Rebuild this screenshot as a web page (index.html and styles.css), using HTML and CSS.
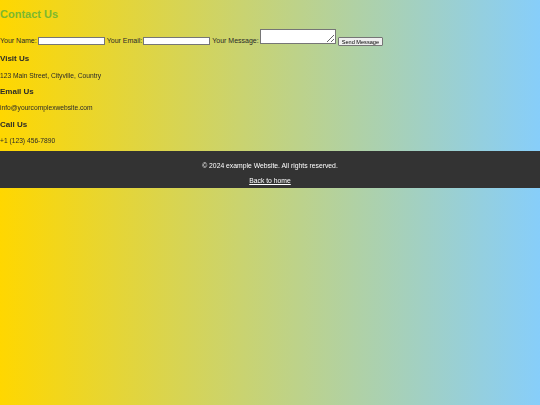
FILE: index.html
```html
<!DOCTYPE html>
<html>
<head>
<meta charset="utf-8">
<link rel="stylesheet" href="styles.css">
</head>
<body>
<main class="contact">
  <h2 class="title">Contact Us</h2>
  <form class="form">
    <label class="lbl">Your Name:</label>
    <input class="inp" type="text">
    <label class="lbl">Your Email:</label>
    <input class="inp" type="email">
    <label class="lbl">Your Message:</label>
    <textarea class="ta"></textarea>
    <button class="btn" type="button">Send Message</button>
  </form>
  <section class="info">
    <h3 class="ih">Visit Us</h3>
    <p class="ip">123 Main Street, Cityville, Country</p>
    <h3 class="ih">Email Us</h3>
    <p class="ip">info@yourcomplexwebsite.com</p>
    <h3 class="ih">Call Us</h3>
    <p class="ip last">+1 (123) 456-7890</p>
  </section>
</main>
<footer class="footer">
  <p class="copy">© 2024 example Website. All rights reserved.</p>
  <a class="back" href="#">Back to home</a>
</footer>
</body>
</html>
```
FILE: styles.css
```css
html, body { margin: 0; padding: 0; }
body {
  min-height: 405px;
  background: linear-gradient(to right, #ffd700, #87cefa);
  font-family: "Liberation Sans", Arial, sans-serif;
  color: #2a2a2a;
}
.title {
  margin: 0;
  padding-top: 7.5px;
  font-size: 11px;
  line-height: 13px;
  color: #7cb82f;
  font-weight: bold;
}
.form {
  margin-top: 8.5px;
  display: flex;
  align-items: flex-end;
  font-size: 7px;
  line-height: 7px;
}
.lbl { margin-right: 1px; margin-bottom: 0; }
.inp {
  width: 67px; height: 8px; box-sizing: border-box;
  border: 1px solid #767676; padding: 0; margin: 0 2px -1px 0;
  background: #fff;
}
.ta {
  width: 76px; height: 15px; box-sizing: border-box;
  border: 1px solid #767676; padding: 0; margin: 0 2px 0 0;
  resize: both; background: #fff;
}
.btn {
  height: 9px; box-sizing: border-box;
  font-family: "Liberation Sans", Arial, sans-serif;
  font-size: 5.6px; line-height: 6px; padding: 0 3px;
  border: 1px solid #767676; border-radius: 1px;
  background: #efefef; color: #000;
  margin-bottom: -2px;
}
.info { margin-top: 10px; }
.ih {
  margin: 0; font-size: 8px; line-height: 10px; font-weight: bold; color: #2a2a2a;
}
.ip {
  margin: 7.6px 0 7.3px; font-size: 6.7px; line-height: 8px; color: #2a2a2a;
}
.ip.last { margin-bottom: 5.4px; }
.footer {
  background: #333; color: #fff; text-align: center;
  padding: 10.5px 0 2.5px; font-size: 6.8px; line-height: 9px;
}
.copy { margin: 0 0 6px; }
.back { color: #fff; text-decoration: underline; }
```
